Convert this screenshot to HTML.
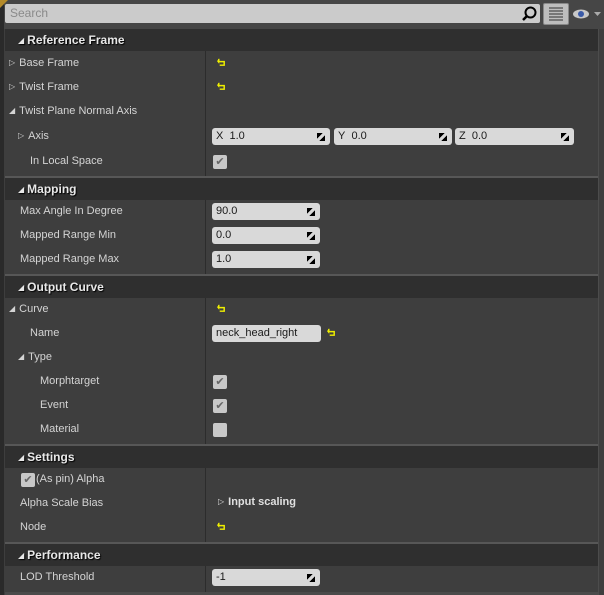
<!DOCTYPE html>
<html><head><style>
*{margin:0;padding:0;box-sizing:border-box}
body{width:604px;height:595px;background:#3e3e3e;position:relative;overflow:hidden;font-family:"Liberation Sans",sans-serif;font-size:11px;color:#d4d4d4}
.a{position:absolute}
.top{left:0;top:0;width:604px;height:29px;background:#464646}
.search{left:5px;top:4px;width:535px;height:19px;background:#cbcbcb;border-radius:2px;color:#8a8a8a;font-size:12px;padding:2px 0 0 5px}
.hdr{left:5px;width:593px;height:22px;background:#2f2f2f;font-weight:bold;font-size:12px;color:#e8e8e8;padding:4px 0 0 13px;text-shadow:1px 1px 1px #000}
.hdr span{font-size:8px;font-weight:normal;margin-right:3px;position:relative;top:-1px}
.sep{left:5px;width:593px;height:2px;background:#575757}
.lbl{white-space:nowrap}
.t{font-size:8px;margin-right:4px;position:relative;top:-1px}
.inp{height:17px;background:#d9d9d9;border-radius:3px;color:#1a1a1a;padding:2px 0 0 4px;font-size:11px}
.inp .d{position:absolute;right:5px;top:5px;width:8px;height:8px;background:linear-gradient(135deg,#000 35%,transparent 35%,transparent 65%,#000 65%)}
.cb{width:14px;height:14px;background:#c8c8c8;border-radius:2px;color:#666;font-size:11px;text-align:center;line-height:14px}
.vl{left:205px;width:1px;background:#2c2c2c}
</style></head><body>
<svg width="0" height="0" style="position:absolute"><defs><symbol id="ar" viewBox="0 0 10 10"><path d="M2 1v3h6v4H3" fill="none" stroke="#f0f000" stroke-width="1.6"/><path d="M0 3.5l2.5-3v6z" fill="#f0f000"/></symbol></defs></svg>
<div class="a top"></div>
<div class="a" style="left:0;top:0;width:4px;height:595px;background:#2a2a2a"></div>
<div class="a" style="left:0;top:0;width:0;height:0;border-top:8px solid #b58b2a;border-right:8px solid transparent"></div>
<div class="a" style="left:598px;top:29px;width:1px;height:566px;background:#4c4c4c"></div>
<div class="a search">Search</div>
<svg class="a" style="left:520px;top:5px" width="18" height="18"><circle cx="10.5" cy="7.5" r="5" fill="none" stroke="#000" stroke-width="2"/><line x1="7" y1="11" x2="3" y2="15" stroke="#000" stroke-width="2.5"/></svg>
<div class="a" style="left:543px;top:3px;width:26px;height:22px;background:#bdbdbd;border:1px solid #888;border-radius:2px"></div>
<svg class="a" style="left:549px;top:7px" width="14" height="14"><g fill="#777"><rect x="0" y="0" width="14" height="2"/><rect x="0" y="3" width="14" height="2"/><rect x="0" y="6" width="14" height="2"/><rect x="0" y="9" width="14" height="2"/><rect x="0" y="12" width="14" height="2"/></g></svg>
<svg class="a" style="left:573px;top:8px" width="30" height="12"><ellipse cx="8" cy="6" rx="8" ry="4.5" fill="#c8c8c8"/><circle cx="8" cy="6" r="3" fill="#3a5aa8"/><path d="M21 4h7l-3.5 4z" fill="#aaa"/></svg>

<div class="a hdr" style="top:29px"><span>◢</span>Reference Frame</div>
<div class="a vl" style="top:51px;height:125px"></div>
<div class="a lbl" style="left:9px;top:57px"><span class="t">▷</span>Base Frame</div>
<svg class="a" style="left:217px;top:58px" width="9" height="9"><use href="#ar"/></svg>
<div class="a lbl" style="left:9px;top:81px"><span class="t">▷</span>Twist Frame</div>
<svg class="a" style="left:217px;top:82px" width="9" height="9"><use href="#ar"/></svg>
<div class="a lbl" style="left:9px;top:105px"><span class="t">◢</span>Twist Plane Normal Axis</div>
<div class="a lbl" style="left:18px;top:130px"><span class="t">▷</span>Axis</div>
<div class="a inp" style="left:212px;top:128px;width:118px">X&nbsp; 1.0<span class="d"></span></div>
<div class="a inp" style="left:334px;top:128px;width:118px">Y&nbsp; 0.0<span class="d"></span></div>
<div class="a inp" style="left:455px;top:128px;width:119px">Z&nbsp; 0.0<span class="d"></span></div>
<div class="a lbl" style="left:30px;top:155px">In Local Space</div>
<div class="a cb" style="left:213px;top:155px">✔</div>
<div class="a sep" style="top:176px"></div>

<div class="a hdr" style="top:178px"><span>◢</span>Mapping</div>
<div class="a vl" style="top:200px;height:74px"></div>
<div class="a lbl" style="left:20px;top:205px">Max Angle In Degree</div>
<div class="a inp" style="left:212px;top:203px;width:108px">90.0<span class="d"></span></div>
<div class="a lbl" style="left:20px;top:229px">Mapped Range Min</div>
<div class="a inp" style="left:212px;top:227px;width:108px">0.0<span class="d"></span></div>
<div class="a lbl" style="left:20px;top:253px">Mapped Range Max</div>
<div class="a inp" style="left:212px;top:251px;width:108px">1.0<span class="d"></span></div>
<div class="a sep" style="top:274px"></div>

<div class="a hdr" style="top:276px"><span>◢</span>Output Curve</div>
<div class="a vl" style="top:298px;height:146px"></div>
<div class="a lbl" style="left:9px;top:303px"><span class="t">◢</span>Curve</div>
<svg class="a" style="left:217px;top:304px" width="9" height="9"><use href="#ar"/></svg>
<div class="a lbl" style="left:30px;top:327px">Name</div>
<div class="a inp" style="left:212px;top:325px;width:109px">neck_head_right</div>
<svg class="a" style="left:327px;top:328px" width="9" height="9"><use href="#ar"/></svg>
<div class="a lbl" style="left:18px;top:351px"><span class="t">◢</span>Type</div>
<div class="a lbl" style="left:40px;top:375px">Morphtarget</div>
<div class="a cb" style="left:213px;top:375px">✔</div>
<div class="a lbl" style="left:40px;top:399px">Event</div>
<div class="a cb" style="left:213px;top:399px">✔</div>
<div class="a lbl" style="left:40px;top:423px">Material</div>
<div class="a cb" style="left:213px;top:423px"></div>
<div class="a sep" style="top:444px"></div>

<div class="a hdr" style="top:446px"><span>◢</span>Settings</div>
<div class="a vl" style="top:468px;height:74px"></div>
<div class="a cb" style="left:21px;top:473px">✔</div>
<div class="a lbl" style="left:36px;top:473px">(As pin) Alpha</div>
<div class="a lbl" style="left:20px;top:497px">Alpha Scale Bias</div>
<div class="a lbl" style="left:218px;top:496px;font-weight:bold;color:#e0e0e0"><span class="t" style="font-weight:normal">▷</span>Input scaling</div>
<div class="a lbl" style="left:20px;top:521px">Node</div>
<svg class="a" style="left:217px;top:522px" width="9" height="9"><use href="#ar"/></svg>
<div class="a sep" style="top:542px"></div>

<div class="a hdr" style="top:544px"><span>◢</span>Performance</div>
<div class="a vl" style="top:566px;height:29px"></div>
<div class="a lbl" style="left:20px;top:571px">LOD Threshold</div>
<div class="a inp" style="left:212px;top:569px;width:108px">-1<span class="d"></span></div>
<div class="a" style="left:5px;top:592px;width:593px;height:3px;background:#4a4a4a"></div>
</body></html>
